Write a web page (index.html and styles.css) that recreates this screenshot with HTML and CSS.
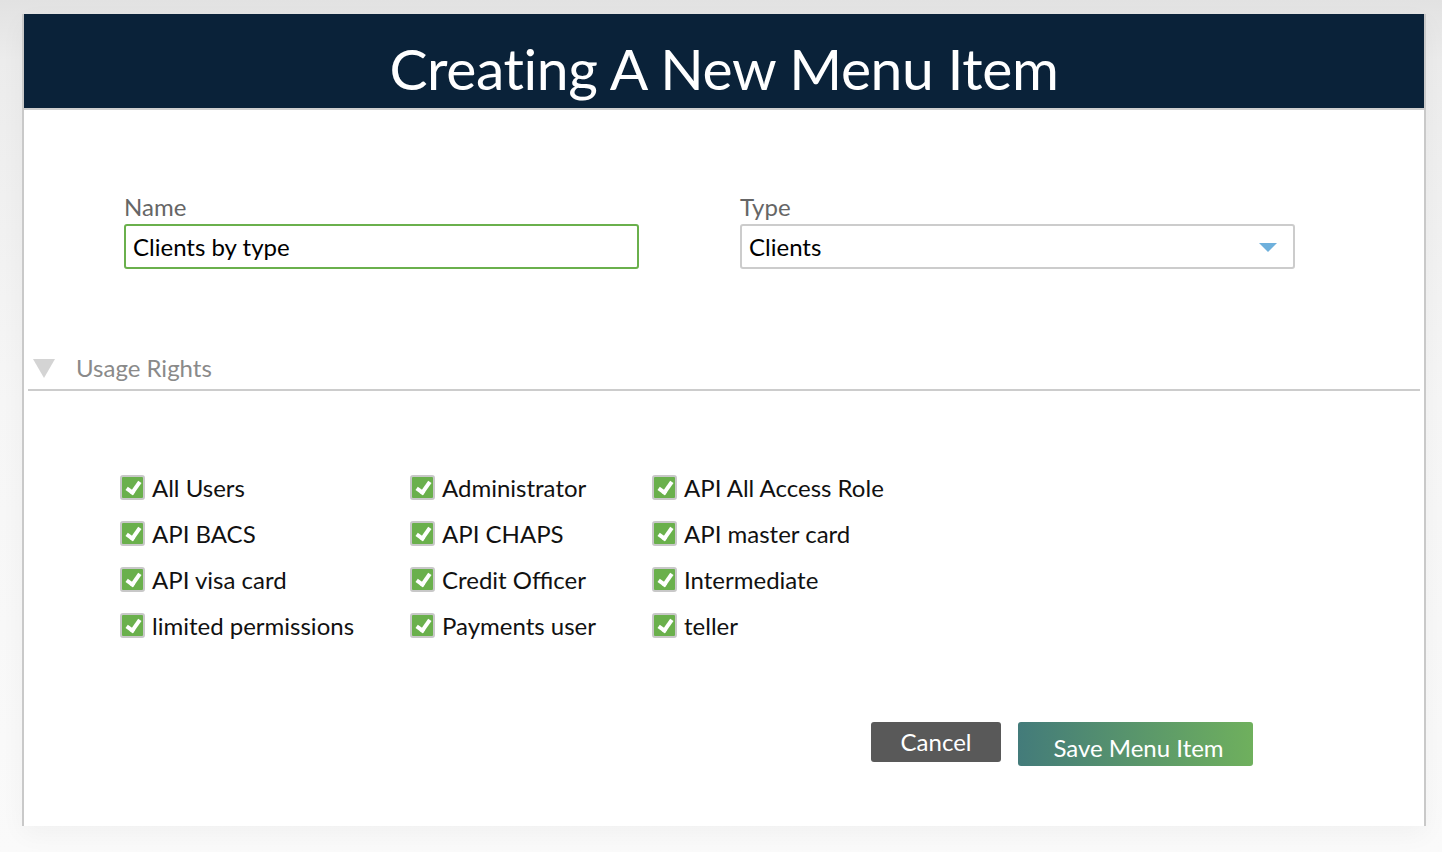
FILE: index.html
```html
<!DOCTYPE html>
<html lang="en">
<head>
    <meta charset="UTF-8">
    <title>Creating A New Menu Item</title>
    <link rel="stylesheet" href="styles.css">
</head>
<body>
    <div class="panel">
        <div class="header">
            <h1>Creating A New Menu Item</h1>
        </div>

        <div class="fields">
            <div class="field name-field">
                <label for="name">Name</label>
                <div class="input active" id="name">Clients by type</div>
            </div>
            <div class="field type-field">
                <label for="type">Type</label>
                <div class="input select" id="type">
                    <span>Clients</span>
                    <svg class="caret" width="18" height="9" viewBox="0 0 18 9"><path d="M0 0 L18 0 L9 9 Z" fill="#6eb0dc"/></svg>
                </div>
            </div>
        </div>

        <div class="section-head">
            <svg class="toggle" width="22" height="19" viewBox="0 0 22 19"><path d="M0 0 L22 0 L11 19 Z" fill="#d4d4d4"/></svg>
            <span>Usage Rights</span>
        </div>

        <div class="rights">
            <div class="right"><span class="check"></span>All Users</div>
            <div class="right"><span class="check"></span>Administrator</div>
            <div class="right"><span class="check"></span>API All Access Role</div>
            <div class="right"><span class="check"></span>API BACS</div>
            <div class="right"><span class="check"></span>API CHAPS</div>
            <div class="right"><span class="check"></span>API master card</div>
            <div class="right"><span class="check"></span>API visa card</div>
            <div class="right"><span class="check"></span>Credit Officer</div>
            <div class="right"><span class="check"></span>Intermediate</div>
            <div class="right"><span class="check"></span>limited permissions</div>
            <div class="right"><span class="check"></span>Payments user</div>
            <div class="right"><span class="check"></span>teller</div>
        </div>

        <div class="actions">
            <button class="btn cancel">Cancel</button>
            <button class="btn save">Save Menu Item</button>
        </div>
    </div>
</body>
</html>
```

FILE: styles.css
```css
html, body {
    height: 100%;
}

body {
    margin: 0;
    font-family: Lato, "Open Sans", sans-serif;
    background: linear-gradient(to bottom, #e2e2e2 0, #ececec 60px, #f6f6f6 400px, #fafafa 100%);
    color: #111;
    overflow: hidden;
}

.panel {
    width: 1400px;
    height: 812px;
    margin: 14px 0 0 22px;
    background: white;
    border-left: 2px solid #c9c9c9;
    border-right: 2px solid #c9c9c9;
    box-shadow: 0 8px 24px rgba(0, 0, 0, 0.04);
}

.header {
    box-sizing: border-box;
    height: 96px;
    padding-top: 14px;
    background: #0a2239;
    border-bottom: 2px solid #cfcfcf;
    display: flex;
    align-items: center;
    justify-content: center;
}

.header h1 {
    margin: 0;
    color: white;
    font-weight: 400;
    font-size: 57px;
    letter-spacing: -0.4px;
}

.fields {
    display: flex;
    padding: 82px 0 0 100px;
    gap: 101px;
}

.field label {
    display: block;
    color: #666;
    font-size: 24px;
    line-height: 30px;
    margin-bottom: 2px;
}

.input {
    box-sizing: border-box;
    height: 45px;
    border: 2px solid #cccccc;
    border-radius: 3px;
    font-size: 24px;
    padding: 0 7px;
    display: flex;
    align-items: center;
    color: #000;
}

.name-field .input {
    width: 515px;
}

.type-field .input {
    width: 555px;
}

.input.active {
    border-color: #6ab04c;
}

.select {
    justify-content: space-between;
}

.caret {
    margin-right: 9px;
    margin-top: 1px;
}

.section-head {
    margin: 80px 4px 0 4px;
    border-bottom: 2px solid #cccccc;
    height: 36px;
    display: flex;
    align-items: center;
    gap: 21px;
    padding-left: 5px;
    padding-bottom: 4px;
    color: #8a8a8a;
    font-size: 24px;
}

.toggle {
    margin-top: 3px;
}

.rights {
    display: grid;
    grid-template-columns: 290px 242px 300px;
    grid-auto-rows: 46px;
    padding: 73px 0 0 96px;
    font-size: 24px;
}

.right {
    display: flex;
    align-items: center;
    gap: 7px;
    height: 46px;
}

.check {
    box-sizing: border-box;
    width: 25px;
    height: 25px;
    border: 2px solid #c8c8c8;
    border-radius: 3px;
    background: #6ab04c;
    position: relative;
}

.check::after {
    content: "";
    position: absolute;
    left: 7px;
    top: 2px;
    width: 5px;
    height: 11px;
    border: solid white;
    border-width: 0 4px 4px 0;
    transform: rotate(35deg);
}

.actions {
    display: flex;
    justify-content: flex-end;
    align-items: flex-start;
    gap: 17px;
    padding: 74px 171px 0 0;
}

.btn {
    border: none;
    border-radius: 3px;
    color: white;
    font-family: Lato, "Open Sans", sans-serif;
    font-size: 24px;
    cursor: pointer;
}

.cancel {
    width: 130px;
    height: 40px;
    background: #595959;
    padding: 0 0 2px;
}

.save {
    width: 235px;
    height: 44px;
    background: linear-gradient(to right, #437b7a, #6fb05d);
    padding: 6px 0 0 6px;
}
```
